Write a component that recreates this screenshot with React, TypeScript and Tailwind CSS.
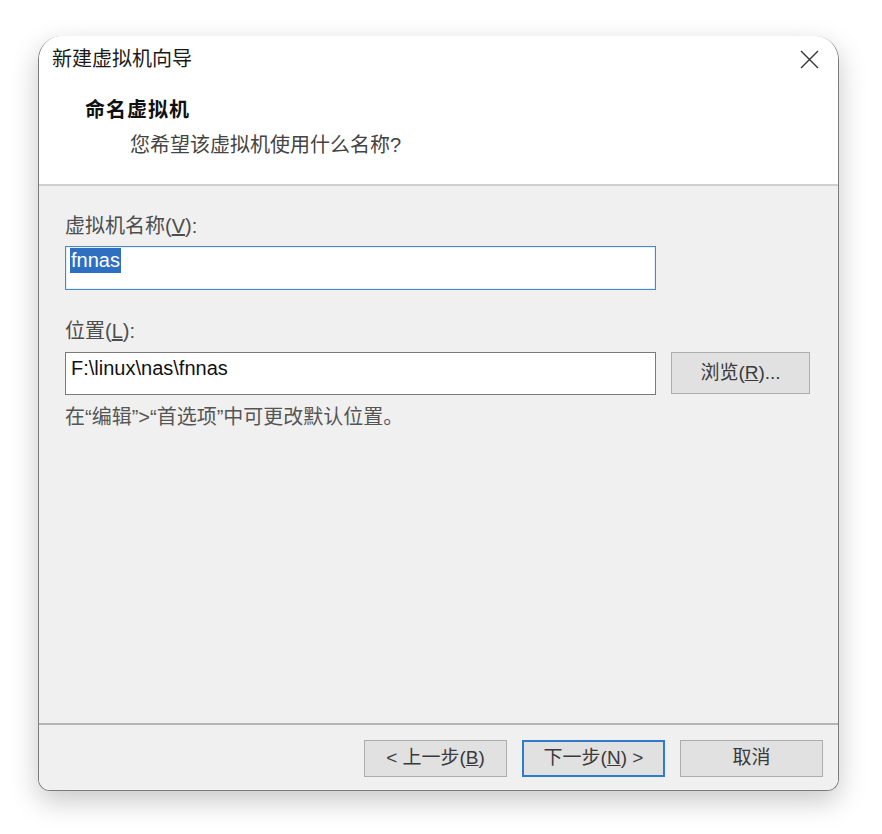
import React from 'react';

const FONT = '"Liberation Sans", "Noto Sans CJK SC", sans-serif';

// 向导窗口里的普通按钮
const WizardButton: React.FC<{ children: React.ReactNode; primary?: boolean; className?: string }> = ({
  children,
  primary,
  className = '',
}) => (
  <div
    className={`flex items-center justify-center bg-[#e1e1e1] text-[19px] text-[#3a3a3a] ${
      primary ? 'border-2 border-[#2f7bd0]' : 'border border-[#adadad]'
    } ${className}`}
  >
    {children}
  </div>
);

const App: React.FC = () => {
  return (
    <div className="w-[882px] h-[834px] bg-white pl-[38px] pt-[36px]" style={{ fontFamily: FONT }}>
      <div className="w-[801px] h-[755px] flex flex-col bg-white rounded-t-[24px] rounded-b-[12px] border-x border-b border-[#7c7c7c] shadow-[0_10px_28px_rgba(0,0,0,0.22)] overflow-hidden">
        {/* 标题栏 + 页眉 */}
        <div className="bg-white border-b-2 border-[#cfcfcf]">
          <div className="h-[46px] flex items-center justify-between pl-[13px] pr-[19px]">
            <span className="text-[20px] text-[#1a1a1a]">新建虚拟机向导</span>
            <svg width="19" height="19" viewBox="0 0 19 19" className="text-[#333]">
              <path d="M1 1 L18 18 M18 1 L1 18" stroke="currentColor" strokeWidth="1.4" fill="none" />
            </svg>
          </div>
          <div className="h-[102px] pt-[16px] pl-[46px]">
            <div className="text-[20px] leading-[24px] font-bold tracking-[1px] text-[#111]">命名虚拟机</div>
            <div className="mt-[11px] pl-[45px] text-[20px] leading-[24px] text-[#444]">
              您希望该虚拟机使用什么名称?
            </div>
          </div>
        </div>

        {/* 主体 */}
        <div className="flex-1 bg-[#f0f0f0] pl-[26px] pt-[28px]">
          <div className="text-[20px] leading-[24px] text-[#4d4d4d]">
            虚拟机名称(<u>V</u>):
          </div>
          <div className="mt-[8px] w-[591px] h-[44px] bg-white border border-[#4a89c4] shadow-[inset_0_0_0_1px_#e3f0fb] flex items-start pt-[1px] pl-[4px]">
            <span className="inline-block h-[25px] bg-[#2f6fc1] text-white text-[20px] leading-[25px] px-[1px]">
              fnnas
            </span>
          </div>

          <div className="mt-[29px] text-[20px] leading-[24px] text-[#4d4d4d]">
            位置(<u>L</u>):
          </div>
          <div className="mt-[9px] flex items-start gap-[15px]">
            <div className="w-[591px] h-[43px] bg-white border border-[#7a7a7a] pt-[3px] pl-[5px] text-[20px] leading-[25px] text-[#111]">
              F:\linux\nas\fnnas
            </div>
            <WizardButton className="w-[139px] h-[42px]">
              浏览(<u>R</u>)...
            </WizardButton>
          </div>
          <div className="mt-[10px] text-[20px] leading-[24px] text-[#555]">
            在“编辑”&gt;“首选项”中可更改默认位置。
          </div>
        </div>

        {/* 底部按钮栏 */}
        <div className="h-[67px] bg-[#f0f0f0] border-t-2 border-[#b4b4b4] flex justify-end items-start pt-[15px] pr-[15px] gap-[15px]">
          <WizardButton className="w-[143px] h-[37px]">
            &lt; 上一步(<u>B</u>)
          </WizardButton>
          <WizardButton primary className="w-[143px] h-[37px]">
            下一步(<u>N</u>) &gt;
          </WizardButton>
          <WizardButton className="w-[143px] h-[37px]">取消</WizardButton>
        </div>
      </div>
    </div>
  );
};

export default App;
